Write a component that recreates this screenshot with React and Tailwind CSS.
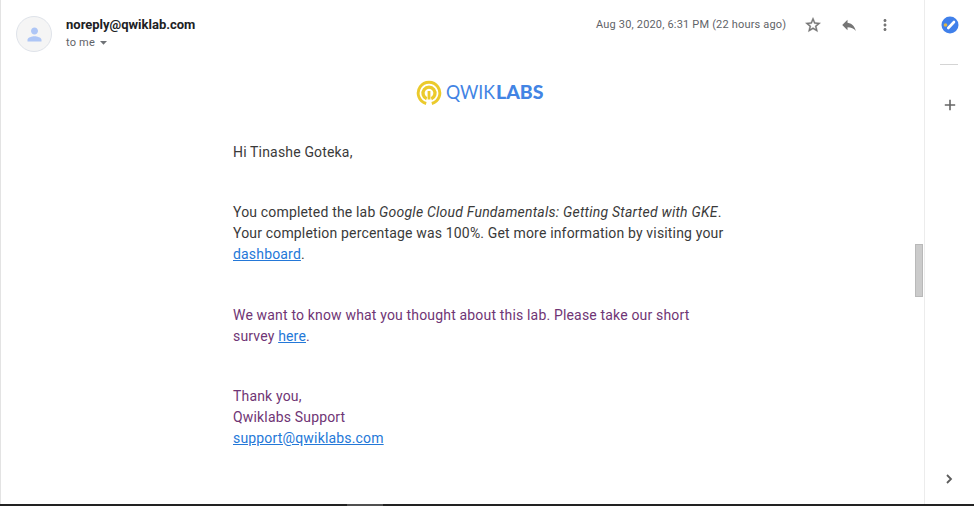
import React from "react";

function Logo() {
  return (
    <svg width="130" height="28" viewBox="0 0 130 28" className="block" aria-label="Qwiklabs">
      <g fill="none" stroke="#ebca2c">
        <path d="M10.200 24.500A10.800 10.800 0 1 1 15.800 24.500" strokeWidth="2.900" />
        <path d="M10.700 19.700A6 6 0 1 1 15.300 19.700" strokeWidth="3.300" />
        <path d="M13 12V20.500" strokeWidth="2.800" />
      </g>
      <g fill="#4284e4" fontFamily="Lato, sans-serif" fontSize="18.500">
        <text x="30" y="20" textLength="49" lengthAdjust="spacingAndGlyphs" fontWeight="400">QWIK</text>
        <text x="80" y="20" textLength="47.500" lengthAdjust="spacingAndGlyphs" fontWeight="900">LABS</text>
      </g>
    </svg>
  );
}

function Avatar() {
  return (
    <div className="flex h-9 w-9 items-center justify-center rounded-full border border-[#dfe3ea] bg-[#f5f5f5]">
      <svg width="21" height="21" viewBox="0 0 24 24" fill="#aec6f6">
        <path d="M12 12c2.21 0 4-1.79 4-4s-1.79-4-4-4-4 1.79-4 4 1.79 4 4 4zm0 2c-2.67 0-8 1.34-8 4v2h16v-2c0-2.66-5.33-4-8-4z" />
      </svg>
    </div>
  );
}

function Header() {
  return (
    <header className="flex h-[52px] pt-4">
      <div className="ml-[15px]">
        <Avatar />
      </div>
      <div className="ml-[14px] flex-1">
        <div className="text-[13px] leading-[18px] font-bold text-[#202124]">noreply@qwiklab.com</div>
        <div className="flex items-center text-[11px] leading-[17px] tracking-[0.2px] text-[#5f6368]">
          to me
          <svg width="7" height="4" viewBox="0 0 7 4" className="ml-[5px]" fill="#6f7276">
            <path d="M0 0h7L3.5 3.7z" />
          </svg>
        </div>
      </div>
      <div className="flex h-[18px] items-center">
        <span className="w-[190px] text-[11px] tracking-[0.18px] whitespace-nowrap text-[#5f6368]">
          Aug 30, 2020, 6:31 PM (22 hours ago)
        </span>
        <svg width="18" height="18" viewBox="0 0 24 24" className="ml-[18px]" fill="#757575" stroke="#757575" strokeWidth="0.5">
          <path d="M22 9.24l-7.19-.62L12 2 9.19 8.63 2 9.24l5.46 4.73L5.82 21 12 17.27 18.18 21l-1.63-7.03L22 9.24zM12 15.4l-3.76 2.27 1-4.28-3.32-2.88 4.38-.38L12 6.1l1.71 4.04 4.38.38-3.32 2.88 1 4.28L12 15.4z" />
        </svg>
        <svg width="18" height="18" viewBox="0 0 24 24" className="ml-[18px]" fill="#757575">
          <path d="M10 9V5l-7 7 7 7v-4.100c5 0 8.500 1.600 11 5.100-1-5-4-10-11-11z" />
        </svg>
        <svg width="18" height="18" viewBox="0 0 24 24" className="mr-[30px] ml-[18px]" fill="#757575">
          <path d="M12 8c1.100 0 2-.9 2-2s-.9-2-2-2-2 .9-2 2 .9 2 2 2zm0 2c-1.100 0-2 .9-2 2s.9 2 2 2 2-.9 2-2-.9-2-2-2zm0 6c-1.100 0-2 .9-2 2s.9 2 2 2 2-.9 2-2-.9-2-2-2z" />
        </svg>
      </div>
    </header>
  );
}

function Link({ children }) {
  return <a className="text-[#2478d8] underline">{children}</a>;
}

function Message() {
  return (
    <div className="ml-[232px] text-[14px] leading-[21px] tracking-[0.17px] whitespace-nowrap text-[#3a3a3a]">
      <p>Hi Tinashe Goteka,</p>
      <p className="mt-[39px]">
        You completed the lab <em className="tracking-[0.23px]">Google Cloud Fundamentals: Getting Started with GKE</em>.<br />
        Your completion percentage was 100%. Get more information by visiting your<br />
        <Link>dashboard</Link>.
      </p>
      <div className="mt-10 text-[#6f3575]">
        <p>
          We want to know what you thought about this lab. Please take our short<br />
          survey <Link>here</Link>.
        </p>
        <p className="mt-[39px]">
          Thank you,<br />
          Qwiklabs Support<br />
          <Link>support@qwiklabs.com</Link>
        </p>
      </div>
    </div>
  );
}

function SidePanel() {
  return (
    <aside className="flex w-[50px] flex-col items-center border-l border-[#ececec] pt-4">
      <svg width="18" height="18" viewBox="0 0 18 18" className="shrink-0">
        <circle cx="9" cy="9" r="8.5" fill="#4080ea" />
        <path d="M7.300 12L13 6" stroke="#fff" strokeWidth="2.600" strokeLinecap="round" />
        <circle cx="4.500" cy="9" r="1.800" fill="#dfb647" />
      </svg>
      <div className="mt-[30px] mr-px h-px w-[18px] bg-[#d4d4d4]" />
      <svg width="12" height="12" viewBox="0 0 12 12" className="mt-[34px] shrink-0" stroke="#666" strokeWidth="1.600">
        <path d="M6 .8v10.400M.8 6h10.400" />
      </svg>
      <svg width="8" height="10" viewBox="0 0 8 10" className="mt-auto mr-0.5 mb-[20px] shrink-0" fill="none" stroke="#5c5c5c" strokeWidth="1.800">
        <path d="M2 1l4 4-4 4" />
      </svg>
    </aside>
  );
}

export default function App() {
  return (
    <div className="flex h-[506px] w-[974px] flex-col overflow-hidden bg-white font-['Roboto',sans-serif]">
      <div className="flex min-h-0 flex-1">
        <main className="flex flex-1 border-l border-[#e3e3e3]">
          <div className="flex-1">
            <Header />
            <div className="mt-[27px] mb-[35px] ml-[415px]">
              <Logo />
            </div>
            <Message />
          </div>
          <div className="-ml-[9px] w-[9px] pt-[244px]">
            <div className="h-[53px] w-2 border border-[#b9b9b9] bg-[#cbcbcb]" />
          </div>
        </main>
        <SidePanel />
      </div>
      <footer className="h-0.5 shrink-0 bg-[#222222]">
        <div className="ml-[347px] h-0.5 w-9 bg-[#505050]" />
      </footer>
    </div>
  );
}
